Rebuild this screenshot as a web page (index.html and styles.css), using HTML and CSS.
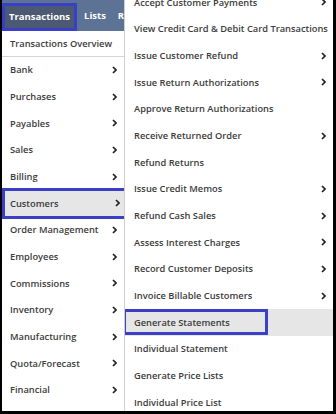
FILE: index.html
```html
<!DOCTYPE html>
<html lang="en">
<head>
    <meta charset="UTF-8">
    <title>Transactions menu</title>
    <link rel="stylesheet" href="styles.css">
</head>
<body>
    <div class="frame">
        <div class="left">
            <div class="topbar">
                <span class="tab active">Transactions</span>
                <span class="tab">Lists</span>
                <span class="tab">Reports</span>
            </div>
            <div class="item overview">Transactions Overview</div>
            <div class="item">Bank <svg class="chev" viewBox="0 0 5 8"><polyline points="1,1 4,4 1,7"/></svg></div>
            <div class="item">Purchases <svg class="chev" viewBox="0 0 5 8"><polyline points="1,1 4,4 1,7"/></svg></div>
            <div class="item">Payables <svg class="chev" viewBox="0 0 5 8"><polyline points="1,1 4,4 1,7"/></svg></div>
            <div class="item">Sales <svg class="chev" viewBox="0 0 5 8"><polyline points="1,1 4,4 1,7"/></svg></div>
            <div class="item">Billing <svg class="chev" viewBox="0 0 5 8"><polyline points="1,1 4,4 1,7"/></svg></div>
            <div class="item selected">Customers <svg class="chev" viewBox="0 0 5 8"><polyline points="1,1 4,4 1,7"/></svg></div>
            <div class="item">Order Management <svg class="chev" viewBox="0 0 5 8"><polyline points="1,1 4,4 1,7"/></svg></div>
            <div class="item">Employees <svg class="chev" viewBox="0 0 5 8"><polyline points="1,1 4,4 1,7"/></svg></div>
            <div class="item">Commissions <svg class="chev" viewBox="0 0 5 8"><polyline points="1,1 4,4 1,7"/></svg></div>
            <div class="item">Inventory <svg class="chev" viewBox="0 0 5 8"><polyline points="1,1 4,4 1,7"/></svg></div>
            <div class="item">Manufacturing <svg class="chev" viewBox="0 0 5 8"><polyline points="1,1 4,4 1,7"/></svg></div>
            <div class="item">Quota/Forecast <svg class="chev" viewBox="0 0 5 8"><polyline points="1,1 4,4 1,7"/></svg></div>
            <div class="item">Financial <svg class="chev" viewBox="0 0 5 8"><polyline points="1,1 4,4 1,7"/></svg></div>
        </div>
        <div class="sub">
            <div class="item">Accept Customer Payments <svg class="chev" viewBox="0 0 5 8"><polyline points="1,1 4,4 1,7"/></svg></div>
            <div class="item">View Credit Card &amp; Debit Card Transactions</div>
            <div class="item">Issue Customer Refund <svg class="chev" viewBox="0 0 5 8"><polyline points="1,1 4,4 1,7"/></svg></div>
            <div class="item">Issue Return Authorizations <svg class="chev" viewBox="0 0 5 8"><polyline points="1,1 4,4 1,7"/></svg></div>
            <div class="item">Approve Return Authorizations</div>
            <div class="item">Receive Returned Order <svg class="chev" viewBox="0 0 5 8"><polyline points="1,1 4,4 1,7"/></svg></div>
            <div class="item">Refund Returns</div>
            <div class="item">Issue Credit Memos <svg class="chev" viewBox="0 0 5 8"><polyline points="1,1 4,4 1,7"/></svg></div>
            <div class="item">Refund Cash Sales <svg class="chev" viewBox="0 0 5 8"><polyline points="1,1 4,4 1,7"/></svg></div>
            <div class="item">Assess Interest Charges <svg class="chev" viewBox="0 0 5 8"><polyline points="1,1 4,4 1,7"/></svg></div>
            <div class="item">Record Customer Deposits <svg class="chev" viewBox="0 0 5 8"><polyline points="1,1 4,4 1,7"/></svg></div>
            <div class="item">Invoice Billable Customers <svg class="chev" viewBox="0 0 5 8"><polyline points="1,1 4,4 1,7"/></svg></div>
            <div class="item hover">Generate Statements</div>
            <div class="item">Individual Statement</div>
            <div class="item">Generate Price Lists</div>
            <div class="item">Individual Price List</div>
        </div>
    </div>
</body>
</html>
```

FILE: styles.css
```css
body {
    margin: 0;
    background-color: #000;
    font-family: "Open Sans", Arial, sans-serif;
}

.frame {
    display: flex;
    width: 331px;
    height: 411px;
    padding-left: 2px;
    overflow: hidden;
}

.left {
    width: 122px;
    flex-shrink: 0;
    background-color: #fff;
    display: flex;
    flex-direction: column;
}

.topbar {
    height: 31px;
    background-color: #5d7395;
    display: flex;
    align-items: center;
    gap: 2px;
    white-space: nowrap;
    position: relative;
    z-index: 1;
}

.tab {
    color: #fff;
    font-size: 9.5px;
    font-weight: 700;
    padding: 0 5px;
}

.tab.active {
    background-color: #4b5a72;
    line-height: 22px;
    padding: 0 4px;
    margin-top: 2px;
    border: 3px solid #3b3fc5;
}

.item {
    height: 26.67px;
    display: flex;
    align-items: center;
    justify-content: space-between;
    padding: 0 7px 0 8px;
    font-size: 9.3px;
    font-weight: 600;
    color: #3b3b3b;
    white-space: nowrap;
    flex-shrink: 0;
    box-sizing: border-box;
}

.chev {
    width: 5px;
    height: 8px;
    fill: none;
    stroke: #222;
    stroke-width: 1.7;
}

.overview {
    height: 25.67px;
    border-bottom: 1px solid #d4d4d4;
}

.selected {
    background-color: #e6e6e6;
    margin: 0 -1px 0 2px;
    padding-left: 6px;
    padding-right: 5px;
    outline: 3px solid #3b3fc5;
    outline-offset: -1px;
}

.sub {
    flex: 1;
    min-width: 0;
    overflow: hidden;
    background-color: #fff;
    border-left: 1px solid #cfcfcf;
    display: flex;
    flex-direction: column;
    margin-top: -11px;
    position: relative;
    z-index: 2;
}

.sub .item {
    padding-left: 9px;
    padding-right: 7px;
}

.sub .hover {
    background-color: #e6e6e6;
    position: relative;
    overflow: visible;
}

.sub .hover::after {
    content: "";
    position: absolute;
    left: -2px;
    top: 0;
    width: 139px;
    height: 20px;
    border: 3px solid #3b3fc5;
}
```
